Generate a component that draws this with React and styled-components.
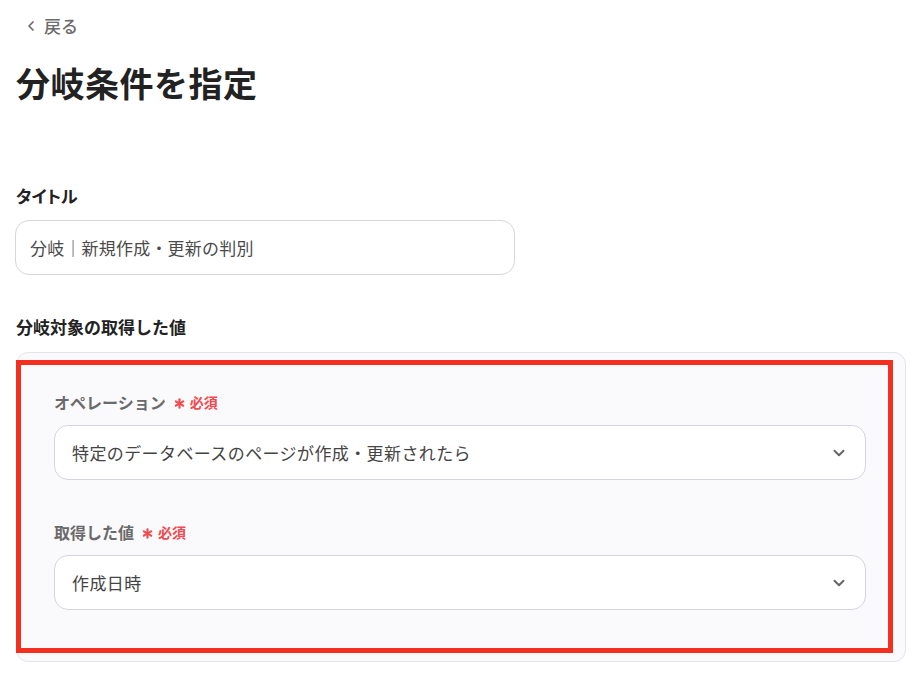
import React from 'react';
import styled, { createGlobalStyle } from 'styled-components';
import { ChevronDown, ChevronLeft, Asterisk } from 'lucide-react';

const Global = createGlobalStyle`
  body {
    margin: 0;
    background: #ffffff;
    font-family: "Noto Sans CJK JP", "Noto Sans", sans-serif;
    color: #222;
  }
`;

const Page = styled.div`
  padding: 16px 0 0 15px;
  width: 891px;
`;

const Back = styled.div`
  display: flex;
  align-items: center;
  gap: 5px;
  height: 20px;
  padding-left: 8px;
  font-size: 17px;
  line-height: 20px;
  color: #6b6b6b;
  font-weight: 500;
`;

const Title = styled.h1`
  margin: 25px 0 0 1px;
  font-size: 34px;
  line-height: 44px;
  font-weight: 700;
  color: #222;
  letter-spacing: 0.5px;
`;

const Label = styled.div`
  margin: ${p => p.$top}px 0 0 1px;
  font-size: 17px;
  line-height: 22px;
  font-weight: 700;
  color: #222;
  font-feature-settings: ${p => (p.$tight ? '"palt"' : 'normal')};
`;

const TextBox = styled.div`
  margin-top: 13px;
  box-sizing: border-box;
  width: 500px;
  height: 55px;
  border: 1px solid #d6d6de;
  border-radius: 14px;
  display: flex;
  align-items: center;
  padding-left: 14px;
  font-size: 17px;
  letter-spacing: 0.2px;
  color: #4a4a4a;
`;

const Panel = styled.div`
  position: relative;
  margin: 14px 0 0 1px;
  box-sizing: border-box;
  width: 890px;
  background: #faf9fc;
  border: 1px solid #e4e3ea;
  border-radius: 12px;
  padding: 38px 39px 51px 37px;
  display: flex;
  flex-direction: column;
`;

const Highlight = styled.div`
  position: absolute;
  left: -1px;
  top: 7px;
  width: 877px;
  height: 293px;
  box-sizing: border-box;
  border: 5px solid #f3301f;
  pointer-events: none;
`;

const FieldLabel = styled.div`
  display: flex;
  align-items: center;
  gap: 4px;
  margin-top: ${p => p.$top}px;
  font-size: 16px;
  line-height: 22px;
  font-weight: 700;
  color: #6a6a6a;
`;

const Required = styled.span`
  display: inline-flex;
  align-items: center;
  gap: 2px;
  margin-left: 1px;
  font-size: 14px;
  font-weight: 700;
  color: #f24a4e;

  svg {
    margin-top: 3px;
  }
`;

const Select = styled.div`
  margin-top: 12px;
  box-sizing: border-box;
  height: 55px;
  background: #fff;
  border: 1px solid #d3d5de;
  border-radius: 14px;
  display: flex;
  align-items: center;
  justify-content: space-between;
  padding: 0 17px 0 17px;
  font-size: 17px;
  letter-spacing: 0.4px;
  color: #444;
`;

const Field = ({ label, value, top }) => (
  <>
    <FieldLabel $top={top}>
      {label}
      <Required>
        <Asterisk size={17} strokeWidth={3} />
        必須
      </Required>
    </FieldLabel>
    <Select>
      <span>{value}</span>
      <ChevronDown size={18} strokeWidth={2.6} color="#666" />
    </Select>
  </>
);

export default function App() {
  return (
    <Page>
      <Global />
      <Back>
        <ChevronLeft size={16} strokeWidth={2.6} />
        戻る
      </Back>
      <Title>分岐条件を指定</Title>
      <Label $top={80} $tight>タイトル</Label>
      <TextBox>分岐｜新規作成・更新の判別</TextBox>
      <Label $top={41}>分岐対象の取得した値</Label>
      <Panel>
        <Field label="オペレーション" value="特定のデータベースのページが作成・更新されたら" top={0} />
        <Field label="取得した値" value="作成日時" top={41} />
        <Highlight />
      </Panel>
    </Page>
  );
}
